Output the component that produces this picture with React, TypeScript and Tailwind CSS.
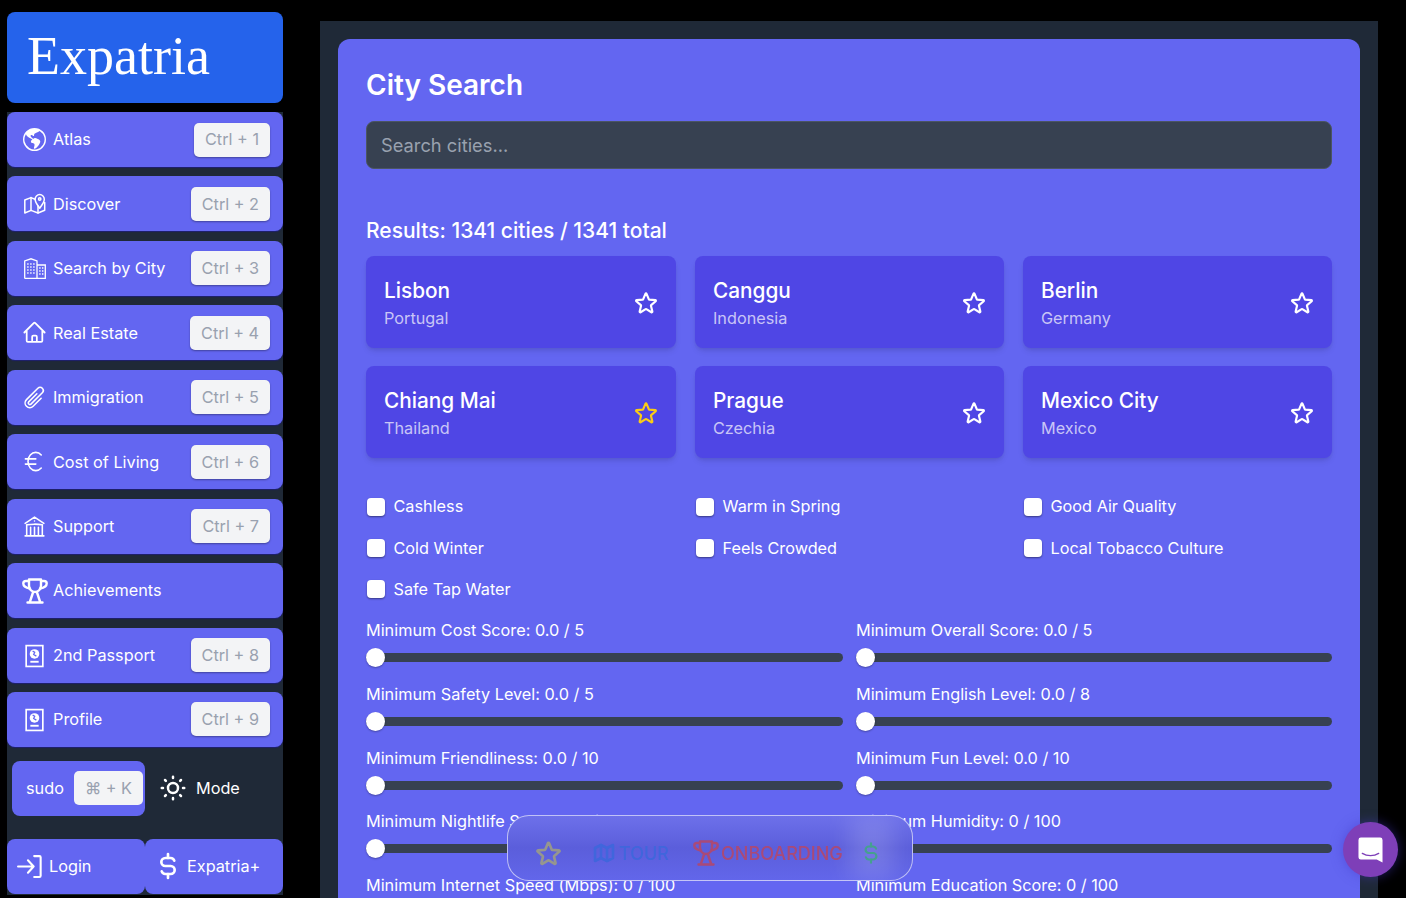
import type { ReactNode } from 'react'
import {
  HiOutlineBuildingLibrary,
  HiOutlineHome,
  HiOutlinePaperClip,
  HiOutlineStar,
} from 'react-icons/hi2'
import { BsGlobeAmericas } from 'react-icons/bs'
import { TbCurrencyDollar, TbCurrencyEuro, TbMap, TbSun } from 'react-icons/tb'

function MapPinIcon() {
  return (
    <svg viewBox="0 0 22 21" className="h-[21px] w-[22px]" fill="none" stroke="currentColor" strokeWidth="1.5" strokeLinejoin="round" strokeLinecap="round">
      <path d="M11 6.200L7 4.600.8 7v13l6.200-2.600 7 2.600 6.700-2.800V9.500" />
      <path d="M7 4.600v12.800M14 13v7" />
      <path d="M15.700 15.200c-2.600-3.700-4.600-6-4.600-9a4.600 4.600 0 1 1 9.200 0c0 3-2 5.300-4.600 9z" />
      <circle cx="15.700" cy="6" r="1.200" />
    </svg>
  )
}

function BuildingsIcon() {
  return (
    <svg viewBox="0 0 22 21" className="h-[21px] w-[22px]" fill="none" stroke="currentColor" strokeWidth="1.3">
      <path d="M.7 20.400V3L7 .8l6 2.200v17.400M13 7h8.300v13.400H.7" />
      <path
        d="M3.200 6h1.400M6.200 6h1.400M9.200 6h1.400M3.200 9h1.400M6.200 9h1.400M9.200 9h1.400M3.200 12h1.400M6.200 12h1.400M9.200 12h1.400M3.200 15h1.400M6.200 15h1.400M9.200 15h1.400M15.200 10h1.400M18 10h1.400M15.200 13h1.400M18 13h1.400M15.200 16h1.400M18 16h1.400"
        strokeWidth="1.6"
      />
    </svg>
  )
}

function TrophyIcon({ className }: { className: string }) {
  return (
    <svg viewBox="0 0 26 26" className={className} fill="none" stroke="currentColor" strokeWidth="2.4" strokeLinejoin="round" strokeLinecap="round">
      <path d="M7 1.500h12v6c0 4-3 6.500-6 6.500s-6-2.500-6-6.500z" />
      <path d="M7 3H4C2 3 1.300 4.200 1.300 5.500c0 2.500 2.500 4.200 6.700 5M19 3h3c2 0 2.700 1.200 2.700 2.500 0 2.500-2.500 4.200-6.700 5" />
      <path d="M11 14.500L8 23.500M15 14.500l3 9M5.500 24.500h15" />
    </svg>
  )
}

function PassportIcon() {
  return (
    <svg viewBox="0 0 24 24" className="size-[25px]" fill="none" stroke="currentColor" strokeWidth="1.6">
      <rect x="4" y="2.500" width="16" height="20" />
      <circle cx="12" cy="10.500" r="4.600" fill="currentColor" stroke="none" />
      <path d="M10.200 7.800l2 1-1 2.200 2.600 1.600" stroke="#6366f1" strokeWidth="1.200" />
      <path d="M8 18h8" strokeWidth="1.800" />
    </svg>
  )
}

function LoginIcon() {
  return (
    <svg viewBox="0 0 24 24" className="size-[25px]" fill="none" stroke="currentColor" strokeWidth="2" strokeLinejoin="round" strokeLinecap="round">
      <path d="M1 12h15M10.500 6l5.500 6-5.500 6" />
      <path d="M16.500 2h5a1.200 1.200 0 0 1 1.200 1.200v17.600a1.200 1.200 0 0 1-1.200 1.200h-5" />
    </svg>
  )
}

const NAV: { icon: ReactNode; label: string; keys?: string }[] = [
  { icon: <BsGlobeAmericas className="mx-[1px] size-[23px]" />, label: 'Atlas', keys: 'Ctrl + 1' },
  { icon: <span className="mx-[1.5px]"><MapPinIcon /></span>, label: 'Discover', keys: 'Ctrl + 2' },
  { icon: <span className="mx-[1.5px]"><BuildingsIcon /></span>, label: 'Search by City', keys: 'Ctrl + 3' },
  { icon: <HiOutlineHome className="size-[25px]" strokeWidth={1.7} />, label: 'Real Estate', keys: 'Ctrl + 4' },
  { icon: <HiOutlinePaperClip className="size-[25px]" />, label: 'Immigration', keys: 'Ctrl + 5' },
  { icon: <TbCurrencyEuro className="size-[25px] scale-125" strokeWidth={1.2} />, label: 'Cost of Living', keys: 'Ctrl + 6' },
  { icon: <HiOutlineBuildingLibrary className="size-[25px]" />, label: 'Support', keys: 'Ctrl + 7' },
  { icon: <TrophyIcon className="-mx-[0.5px] size-[26px]" />, label: 'Achievements' },
  { icon: <PassportIcon />, label: '2nd Passport', keys: 'Ctrl + 8' },
  { icon: <PassportIcon />, label: 'Profile', keys: 'Ctrl + 9' },
]

const CITIES = [
  { name: 'Lisbon', country: 'Portugal' },
  { name: 'Canggu', country: 'Indonesia' },
  { name: 'Berlin', country: 'Germany' },
  { name: 'Chiang Mai', country: 'Thailand', starred: true },
  { name: 'Prague', country: 'Czechia' },
  { name: 'Mexico City', country: 'Mexico' },
]

const FILTERS = [
  'Cashless',
  'Warm in Spring',
  'Good Air Quality',
  'Cold Winter',
  'Feels Crowded',
  'Local Tobacco Culture',
  'Safe Tap Water',
]

const SLIDERS = [
  'Minimum Cost Score: 0.0 / 5',
  'Minimum Overall Score: 0.0 / 5',
  'Minimum Safety Level: 0.0 / 5',
  'Minimum English Level: 0.0 / 8',
  'Minimum Friendliness: 0.0 / 10',
  'Minimum Fun Level: 0.0 / 10',
  'Minimum Nightlife Score: 0.0 / 10',
  'Minimum Humidity: 0 / 100',
  'Minimum Internet Speed (Mbps): 0 / 100',
  'Minimum Education Score: 0 / 100',
]

function Kbd({ children }: { children: ReactNode }) {
  return (
    <span className="flex h-[34px] items-center rounded-[5px] bg-gray-100 px-[11px] text-[16.25px] text-gray-400 shadow-[0_1px_2px_rgba(0,0,0,0.35)]">
      {children}
    </span>
  )
}

function Sidebar() {
  return (
    <aside className="flex w-[276px] shrink-0 flex-col">
      <div className="flex h-[91px] items-center rounded-lg bg-[#2563eb] pl-[20px] pb-[3px] font-['Liberation_Serif',serif] text-[54px] leading-none text-white">
        Expatria
      </div>
      <div className="mt-[9px] flex h-[783px] flex-col bg-[#1f2937]">
        <nav className="flex flex-col gap-[9.44px]">
          {NAV.map(({ icon, label, keys }) => (
            <div
              key={label}
              className="flex h-[55px] items-center justify-between rounded-lg bg-[#6366f1] pl-[15px] pr-[13px] text-white shadow-[0_1px_1px_rgba(30,27,150,0.6)]"
            >
              <span className="flex items-center gap-[6px] text-[16.25px]">
                {icon}
                {label}
              </span>
              {keys && <Kbd>{keys}</Kbd>}
            </div>
          ))}
        </nav>
        <div className="mt-[14px] flex items-center text-white">
          <div className="ml-[5px] flex h-[55px] w-[133px] items-center gap-[10px] rounded-lg bg-[#6366f1] pl-[14px]">
            <span className="text-[16.25px]">sudo</span>
            <span className="flex h-[34px] items-center rounded-[5px] bg-gray-100 px-[11px] text-[16.25px] text-gray-400">⌘ + K</span>
          </div>
          <TbSun className="ml-[13px] size-[30px]" />
          <span className="ml-[8px] text-[16.25px]">Mode</span>
        </div>
        <div className="mt-[23px] flex">
          <div className="flex h-[55px] w-[138px] items-center gap-[7px] rounded-lg bg-[#6366f1] pl-[10px] text-[16.25px] text-white">
            <LoginIcon />
            Login
          </div>
          <div className="flex h-[55px] w-[138px] items-center gap-[3px] rounded-lg bg-[#6366f1] pl-[7px] text-[16.25px] text-white">
            <TbCurrencyDollar className="size-[32px]" />
            Expatria+
          </div>
        </div>
      </div>
    </aside>
  )
}

function CityCard({ name, country, starred }: { name: string; country: string; starred?: boolean }) {
  return (
    <div className="flex h-[92px] items-center justify-between rounded-lg bg-[#4f46e5] pl-[18px] pr-[17px] shadow-md">
      <div>
        <div className="text-[20.8px] leading-[33px] font-medium text-white">{name}</div>
        <div className="-mt-[1px] text-[16.25px] leading-[24px] text-white/70">{country}</div>
      </div>
      <HiOutlineStar
        className={starred ? 'mt-[2px] size-[26px] text-[#facc15]' : 'mt-[2px] size-[26px] text-white'}
        strokeWidth={2}
      />
    </div>
  )
}

function Filter({ label }: { label: string }) {
  return (
    <label className="flex h-[24px] items-center gap-[8.5px] pl-[1px] text-[16.25px] text-white">
      <span className="size-[18px] rounded-[4px] bg-white shadow-[0_1px_2px_rgba(0,0,0,0.45)]" />
      {label}
    </label>
  )
}

function Slider({ label }: { label: string }) {
  return (
    <div className="h-[63.8px]">
      <div className="h-[24px] text-[16.25px] leading-[24px] text-white">{label}</div>
      <div className="relative mt-[5.5px] flex h-[20px] items-center">
        <div className="h-[9px] w-full rounded-full bg-[#374151]" />
        <div className="absolute left-0 size-[19px] rounded-full bg-white shadow-[0_1px_2px_rgba(0,0,0,0.3)]" />
      </div>
    </div>
  )
}

function Dock() {
  return (
    <div className="absolute left-[507px] top-[815px] z-10 flex h-[66px] w-[406px] items-center overflow-hidden rounded-[22px] border border-white/60 bg-gradient-to-b from-[#6d70ea] via-[#5b5edb] to-[#6266ea] pl-[26px] pt-[10px]">
      <div className="absolute right-[18px] top-0 h-full w-[44px] bg-white/15 blur-md" />
      <div className="relative flex items-center text-[18px] font-medium blur-[0.6px]">
        <HiOutlineStar className="size-[29px] text-[#96968f]" strokeWidth={2.2} />
        <span className="ml-[29px] flex items-center gap-[3px] text-[#4066dc]">
          <TbMap className="size-[24px]" strokeWidth={2.6} />
          TOUR
        </span>
        <span className="ml-[24px] flex items-center gap-[2px] text-[#a94a78]">
          <TrophyIcon className="size-[26px]" />
          ONBOARDING
        </span>
        <TbCurrencyDollar className="ml-[15px] size-[26px] text-[#45a08f]" />
      </div>
    </div>
  )
}

function ChatBubble() {
  return (
    <div className="absolute left-[1343px] top-[822px] flex size-[55px] items-center justify-center rounded-full bg-[#7e3fb8] shadow-[0_0_12px_rgba(67,56,202,0.5)]">
      <svg viewBox="0 0 26 28" className="h-[28px] w-[25px]">
        <path
          d="M3 1h20a2.500 2.500 0 0 1 2.500 2.500V27l-6-3H3a2.500 2.500 0 0 1-2.500-2.500v-18A2.500 2.500 0 0 1 3 1z"
          fill="#fff"
        />
        <path d="M4.500 17.500c5 3.200 12 3.200 17 0" fill="none" stroke="#7e3fb8" strokeWidth="1.400" strokeLinecap="round" />
      </svg>
    </div>
  )
}

export default function App() {
  return (
    <div className="relative flex h-[898px] w-[1406px] overflow-hidden bg-black pl-[7px] pt-[12px] font-['Inter',sans-serif]">
      <Sidebar />
      <main className="ml-[37px] mt-[9px] w-[1058px] bg-[#1f2937] px-[18px] pt-[18px]">
        <section className="h-[1000px] rounded-xl bg-[#6366f1] px-[28px] pt-[27px]">
          <h1 className="text-[28px] leading-[38px] font-semibold text-white">City Search</h1>
          <div className="mt-[17px] flex h-[48px] items-center rounded-lg border border-[#4b5563] bg-[#374151] px-[14px] pt-[1px] text-[18.3px] text-gray-400">
            Search cities...
          </div>
          <h2 className="mt-[47px] text-[21px] leading-[30px] font-medium text-white">
            Results: 1341 cities / 1341 total
          </h2>
          <div className="mt-[10px] grid grid-cols-[310px_309px_309px] gap-x-[19px] gap-y-[18px]">
            {CITIES.map((city) => (
              <CityCard key={city.name} {...city} />
            ))}
          </div>
          <div className="mt-[36.5px] grid grid-cols-[310px_309px_309px] gap-x-[19px] gap-y-[17.3px]">
            {FILTERS.map((label) => (
              <Filter key={label} label={label} />
            ))}
          </div>
          <div className="mt-[16.9px] grid grid-cols-[477px_476px] gap-x-[13px]">
            {SLIDERS.map((label) => (
              <Slider key={label} label={label} />
            ))}
          </div>
        </section>
      </main>
      <Dock />
      <ChatBubble />
    </div>
  )
}
